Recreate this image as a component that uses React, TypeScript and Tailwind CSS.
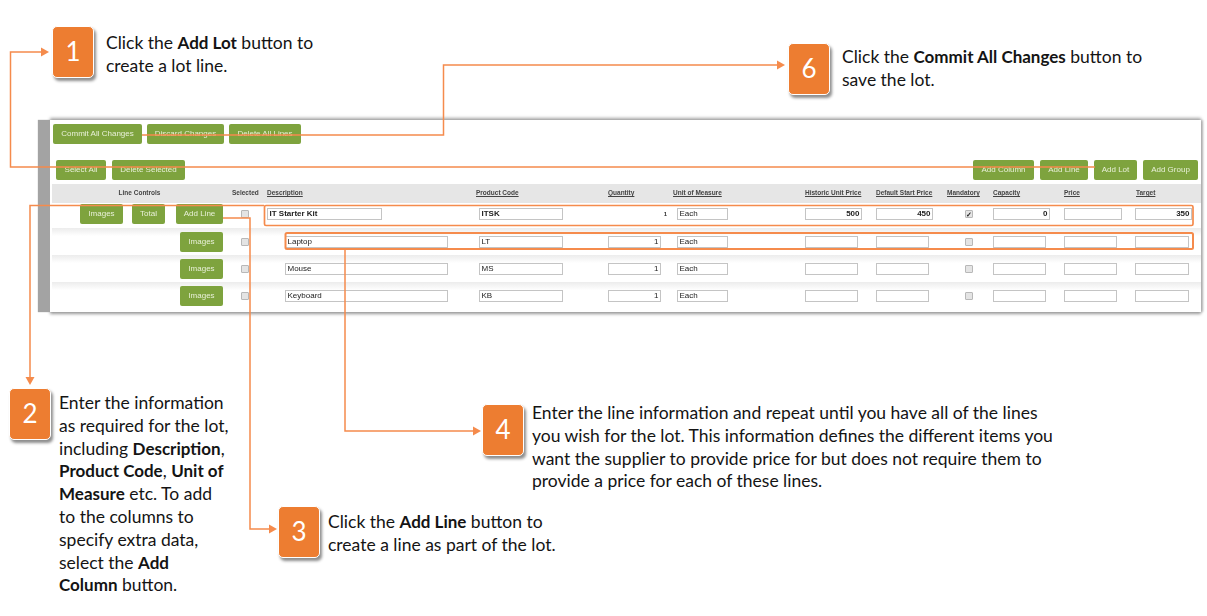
const GRID = "grid grid-cols-[184px_31px_212px_129px_69px_128px_71px_69px_48px_71px_71px_66px] items-center";

const HEADERS: [string, string][] = [
  ["Product Code", "-ml-[3px]"],
  ["Quantity", ""],
  ["Unit of Measure", "-ml-[4px]"],
  ["Historic Unit Price", ""],
  ["Default Start Price", ""],
  ["Mandatory", "ml-[2px]"],
  ["Capacity", ""],
  ["Price", ""],
  ["Target", "ml-[1px]"],
];

const ITEMS = [
  { name: "Laptop", code: "LT" },
  { name: "Mouse", code: "MS" },
  { name: "Keyboard", code: "KB" },
];

function GreenButton({ label, w }: { label: string; w: string }) {
  return (
    <button className={`${w} h-[20px] shrink-0 rounded-[2px] bg-[#7ea33e] text-center text-[8px] leading-none text-[#e8f0d8]`}>
      {label}
    </button>
  );
}

function Field({ value, w, bold, right }: { value?: string; w: string; bold?: boolean; right?: boolean }) {
  return (
    <div
      className={`${w} flex h-[12px] items-center border border-[#c4c4c4] bg-white px-[1.5px] text-[8px] leading-none text-[#222] ${
        bold ? "font-bold" : ""
      } ${right ? "justify-end" : ""}`}
    >
      {value}
    </div>
  );
}

function Check({ checked }: { checked?: boolean }) {
  return (
    <div className="flex h-[8px] w-[8px] items-center justify-center rounded-[1px] border border-[#b8b8b8] bg-[#e4e4e4] text-[7px] font-bold leading-none text-[#222]">
      {checked ? "✓" : ""}
    </div>
  );
}

function Callout({ n, pos }: { n: number; pos: string }) {
  return (
    <div
      className={`absolute ${pos} flex h-[52px] w-[42px] items-center justify-center rounded-[5px] border border-white bg-[#ed7d31] pb-[2px] text-[26px] text-white shadow-[2px_3px_3px_rgba(0,0,0,0.45)]`}
    >
      {n}
    </div>
  );
}

function Connectors() {
  return (
    <svg className="absolute left-0 top-0" width="1207" height="616" fill="none" stroke="#f58b4c">
      <path d="M1095 167H10.500V52H41" strokeWidth="1.500" />
      <path d="M41 47.500L49 52L41 56.500Z" fill="#f58b4c" stroke="none" />
      <path d="M142 135H443.500V65H777" strokeWidth="1.500" />
      <path d="M777 60.500L785 65L777 69.500Z" fill="#f58b4c" stroke="none" />
      <path d="M264 205.500H30V377" strokeWidth="1.500" />
      <path d="M25.500 377L30 385L34.500 377Z" fill="#f58b4c" stroke="none" />
      <rect x="264.500" y="205.500" width="928.500" height="20" rx="1.500" strokeWidth="1.700" />
      <rect x="285.500" y="233" width="907.500" height="16" rx="1.500" strokeWidth="2" />
      <path d="M345 249V431H473" strokeWidth="1.500" />
      <path d="M473 426.500L481 431L473 435.500Z" fill="#f58b4c" stroke="none" />
      <path d="M223 218H250V529H269" strokeWidth="1.500" />
      <path d="M269 524.500L277 529L269 533.500Z" fill="#f58b4c" stroke="none" />
    </svg>
  );
}

function LotPanel() {
  return (
    <div className="h-[192px] w-[1151px] bg-white shadow-[-12px_0_1px_0_#a3a3a3,0_-2px_3px_#a8a8a8,0_2px_3px_#999999,2px_0_2px_#c4c4c4] blur-[0.35px]" style={{ fontFamily: '"Liberation Sans", Arial, sans-serif' }}>
      <div className="flex h-[40px] items-start gap-[5px] pl-[3px] pt-[4px]">
        <GreenButton label="Commit All Changes" w="w-[89px]" />
        <GreenButton label="Discard Changes" w="w-[77px]" />
        <GreenButton label="Delete All Lines" w="w-[72px]" />
      </div>
      <div className="flex h-[24px] items-start pl-[6px] pr-[3px]">
        <div className="flex gap-[6px]">
          <GreenButton label="Select All" w="w-[50px]" />
          <GreenButton label="Delete Selected" w="w-[73px]" />
        </div>
        <div className="ml-auto flex gap-[6px]">
          <GreenButton label="Add Column" w="w-[61px]" />
          <GreenButton label="Add Line" w="w-[48px]" />
          <GreenButton label="Add Lot" w="w-[43px]" />
          <GreenButton label="Add Group" w="w-[55px]" />
        </div>
      </div>

      <div className={`${GRID} ml-[2px] h-[19px] bg-[#e6e6e6] text-[6.500px] font-bold leading-none text-[#444]`}>
        <span className="pr-[9px] text-center">Line Controls</span>
        <span className="-ml-[4px]">Selected</span>
        <span className="underline">Description</span>
        {HEADERS.map(([h, offset]) => (
          <span key={h} className={`underline ${offset}`}>
            {h}
          </span>
        ))}
      </div>

      <div className={`${GRID} ml-[2px] h-[25px] pb-[3px]`}>
        <div className="flex justify-end gap-[9px] pr-[13px]">
          <GreenButton label="Images" w="w-[43px]" />
          <GreenButton label="Total" w="w-[33px]" />
          <GreenButton label="Add Line" w="ml-[2px] w-[47px]" />
        </div>
        <div className="pl-[5px]">
          <Check />
        </div>
        <Field value="IT Starter Kit" w="w-[115px]" bold />
        <Field value="ITSK" w="w-[84px]" bold />
        <div className="pr-[10px] text-right text-[6px] font-bold text-[#333]">1</div>
        <Field value="Each" w="w-[51px]" />
        <Field value="500" w="w-[57px]" bold right />
        <Field value="450" w="w-[57px]" bold right />
        <div className="pl-[20px]">
          <Check checked />
        </div>
        <Field value="0" w="w-[57px]" bold right />
        <Field w="w-[58px]" />
        <Field value="350" w="w-[57px]" bold right />
      </div>

      {ITEMS.map((item) => (
        <div key={item.code} className={`${GRID} ml-[2px] h-[27px] bg-gradient-to-b from-[#ececec] to-white to-30%`}>
          <div className="flex justify-end pr-[13px]">
            <GreenButton label="Images" w="w-[43px]" />
          </div>
          <div className="pl-[5px]">
            <Check />
          </div>
          <div className="pl-[18px]">
            <Field value={item.name} w="w-[163px]" />
          </div>
          <Field value={item.code} w="w-[84px]" />
          <Field value="1" w="w-[53px]" right />
          <Field value="Each" w="w-[51px]" />
          <Field w="w-[53px]" />
          <Field w="w-[53px]" />
          <div className="pl-[20px]">
            <Check />
          </div>
          <Field w="w-[53px]" />
          <Field w="w-[53px]" />
          <Field w="w-[54px]" />
        </div>
      ))}
    </div>
  );
}

export default function App() {
  return (
    <div className="relative h-[616px] w-[1207px] overflow-hidden bg-white pl-[50px] pt-[120px] text-[17.500px] leading-[22.800px] text-[#141414] [&_b]:text-[17px]" style={{ fontFamily: 'Lato, "Noto Sans", sans-serif' }}>
      <LotPanel />
      <Connectors />

      <Callout n={1} pos="left-[52px] top-[26px]" />
      <p className="absolute left-[106px] top-[32px] whitespace-nowrap">
        Click the <b>Add Lot</b> button to
        <br />
        create a lot line.
      </p>

      <Callout n={6} pos="left-[788px] top-[43px]" />
      <p className="absolute left-[842px] top-[46px] whitespace-nowrap">
        Click the <b>Commit All Changes</b> button to
        <br />
        save the lot.
      </p>

      <Callout n={2} pos="left-[9px] top-[388px]" />
      <p className="absolute left-[59px] top-[392px] whitespace-nowrap">
        Enter the information
        <br />
        as required for the lot,
        <br />
        including <b>Description</b>,
        <br />
        <b>Product Code</b>, <b>Unit of</b>
        <br />
        <b>Measure</b> etc. To add
        <br />
        to the columns to
        <br />
        specify extra data,
        <br />
        select the <b>Add</b>
        <br />
        <b>Column</b> button.
      </p>

      <Callout n={3} pos="left-[278px] top-[506px]" />
      <p className="absolute left-[328px] top-[511px] whitespace-nowrap">
        Click the <b>Add Line</b> button to
        <br />
        create a line as part of the lot.
      </p>

      <Callout n={4} pos="left-[482px] top-[404px]" />
      <p className="absolute left-[532px] top-[402px] whitespace-nowrap">
        Enter the line information and repeat until you have all of the lines
        <br />
        you wish for the lot. This information defines the different items you
        <br />
        want the supplier to provide price for but does not require them to
        <br />
        provide a price for each of these lines.
      </p>
    </div>
  );
}
